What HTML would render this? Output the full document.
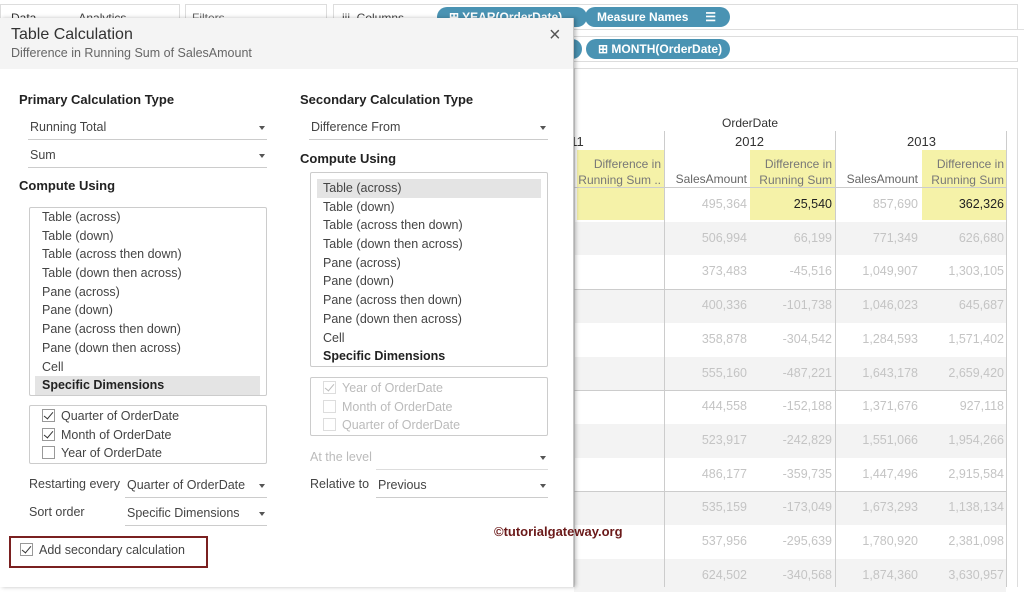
<!DOCTYPE html>
<html><head><meta charset="utf-8"><style>
*{box-sizing:border-box;margin:0;padding:0}
body{width:1024px;height:587px;overflow:hidden;background:#fff;font-family:"Liberation Sans",sans-serif;position:relative;color:#333}
.a{position:absolute;white-space:nowrap}
.pill{position:absolute;height:20px;border-radius:10px;background:#4a93b3;color:#fff;font-size:12px;font-weight:bold;line-height:20px;padding-left:12px}
.dlg{position:absolute;left:0;top:18px;width:574px;height:569px;background:#fff;border-right:1px solid #c8c8c8;box-shadow:2px 0 4px rgba(0,0,0,.25);z-index:5}
.hd{position:absolute;left:0;top:0;width:573px;height:51px;background:#f4f4f4}
.h{font-size:13px;font-weight:bold;color:#222}
.dd{position:absolute;height:26px;border-bottom:1px solid #ccc;font-size:12.5px;color:#444;line-height:26px;padding-left:2px}
.dd:after{content:"";position:absolute;right:2px;top:12px;border-left:3px solid transparent;border-right:3px solid transparent;border-top:4px solid #555}
.box{position:absolute;border:1px solid #ccc;border-radius:2px;font-size:12.5px;color:#444}
.box div{height:18.7px;line-height:18.7px;padding-left:12px}
.sel{background:#e4e4e4;font-weight:bold;color:#222}
.cb{display:inline-block;width:13px;height:13px;border:1px solid #999;vertical-align:-2px;margin-right:6px;position:relative;background:#fff}
.ck:after{content:"";position:absolute;left:3px;top:0px;width:4px;height:8px;border-right:1.5px solid #333;border-bottom:1.5px solid #333;transform:rotate(40deg)}
.dis{color:#bbb}.dis .cb{border-color:#ddd}.dis .ck:after{border-color:#bbb}
.cell{position:absolute;font-size:12px;text-align:right;color:#c4c4c4}
</style></head><body>
<div class="a" style="left:0;top:0;width:1024px;height:30px;background:#fff;border-bottom:1px solid #e0e0e0"></div>
<div class="a" style="left:0;top:4px;width:180px;height:26px;border:1px solid #ddd;font-size:12px;padding:6px 10px">Data<span style="margin-left:42px;color:#444">Analytics</span></div>
<div class="a" style="left:185px;top:4px;width:142px;height:26px;border:1px solid #ddd;font-size:12px;padding:6px 6px;color:#666">Filters</div>
<div class="a" style="left:333px;top:4px;width:685px;height:26px;border:1px solid #ddd;font-size:12px;padding:6px 8px;color:#444">iii&nbsp; Columns</div>
<div class="pill" style="left:437px;top:7px;width:150px">⊞ YEAR(OrderDate)</div>
<div class="pill" style="left:585px;top:7px;width:145px">Measure Names<span style="position:absolute;right:14px">☰</span></div>
<div class="a" style="left:333px;top:36px;width:685px;height:26px;border:1px solid #ddd"></div>
<div class="pill" style="left:540px;top:39px;width:42px"></div>
<div class="pill" style="left:586px;top:39px;width:144px">⊞ MONTH(OrderDate)</div>
<div class="a" style="left:574px;top:68px;width:444px;height:519px;border:1px solid #ddd;border-bottom:none"></div>
<div class="a" style="left:722px;top:116px;font-size:12px;color:#333">OrderDate</div>
<div class="a" style="left:563px;top:134px;font-size:13px">011</div>
<div class="a" style="left:735px;top:134px;font-size:13px">2012</div>
<div class="a" style="left:907px;top:134px;font-size:13px">2013</div>
<div class="a" style="left:577px;top:150px;width:87px;height:70px;background:#f5f2a8"></div>
<div class="a" style="left:750px;top:150px;width:85px;height:70px;background:#f5f2a8"></div>
<div class="a" style="left:922px;top:150px;width:84px;height:70px;background:#f5f2a8"></div>
<div class="a" style="left:664px;top:131px;width:1px;height:456px;background:#ccc"></div>
<div class="a" style="left:835px;top:131px;width:1px;height:456px;background:#ccc"></div>
<div class="a" style="left:1006px;top:131px;width:1px;height:456px;background:#ccc"></div>
<div class="a" style="left:574px;top:187px;width:432px;height:1px;background:#ccc"></div>
<div class="cell" style="left:577px;top:156px;width:84px;line-height:16px;color:#777">Difference in<br>Running Sum ..</div>
<div class="cell" style="left:750px;top:156px;width:82px;line-height:16px;color:#777">Difference in<br>Running Sum ..</div>
<div class="cell" style="left:922px;top:156px;width:82px;line-height:16px;color:#777">Difference in<br>Running Sum ..</div>
<div class="cell" style="left:664px;top:172px;width:83px;color:#666">SalesAmount</div>
<div class="cell" style="left:835px;top:172px;width:83px;color:#666">SalesAmount</div>
<div id="rows"></div>
<script>
var d=[["495,364","25,540","857,690","362,326"],["506,994","66,199","771,349","626,680"],["373,483","-45,516","1,049,907","1,303,105"],["400,336","-101,738","1,046,023","645,687"],["358,878","-304,542","1,284,593","1,571,402"],["555,160","-487,221","1,643,178","2,659,420"],["444,558","-152,188","1,371,676","927,118"],["523,917","-242,829","1,551,066","1,954,266"],["486,177","-359,735","1,447,496","2,915,584"],["535,159","-173,049","1,673,293","1,138,134"],["537,956","-295,639","1,780,920","2,381,098"],["624,502","-340,568","1,874,360","3,630,957"]];
var h="";
for(var i=0;i<12;i++){var y=188+i*33.7;
if(i==0){h+='<div class="a" style="left:577px;top:188px;width:87px;height:32px;background:#f5f2a8"></div><div class="a" style="left:750px;top:188px;width:85px;height:32px;background:#f5f2a8"></div><div class="a" style="left:922px;top:188px;width:84px;height:32px;background:#f5f2a8"></div>';}
if(i%2==1)h+='<div class="a" style="left:574px;top:'+y+'px;width:432px;height:33.7px;background:#f3f3f3;z-index:-1"></div>';
if(i==3||i==6||i==9)h+='<div class="a" style="left:574px;top:'+y+'px;width:432px;height:1px;background:#ccc"></div>';
var xs=[664,750,835,922],ws=[83,82,83,82];
for(var j=0;j<4;j++){var c=(i==0&&(j==1||j==3))?"color:#222":"";
h+='<div class="cell" style="left:'+xs[j]+'px;top:'+(y+9)+'px;width:'+ws[j]+'px;font-size:12.5px;'+c+'">'+d[i][j]+'</div>';}}
document.getElementById("rows").innerHTML=h;
</script>
<div class="a" style="left:494px;top:524px;font-size:13px;font-weight:bold;color:#6b1a1a;z-index:10">©tutorialgateway.org</div>
<div class="dlg">
<div class="hd"></div>
<div class="a" style="left:11px;top:8px;font-size:16px;color:#333">Table Calculation</div>
<div class="a" style="left:11px;top:28px;font-size:12.5px;color:#666">Difference in Running Sum of SalesAmount</div>
<div class="a" style="left:549px;top:6px;font-size:20px;color:#555">×</div>
<div class="a h" style="left:19px;top:74px">Primary Calculation Type</div>
<div class="dd" style="left:28px;top:96px;width:239px">Running Total</div>
<div class="dd" style="left:28px;top:124px;width:239px">Sum</div>
<div class="a h" style="left:19px;top:160px">Compute Using</div>
<div class="box" style="left:29px;top:189px;width:238px;height:189px;padding-top:0">
<div>Table (across)</div><div>Table (down)</div><div>Table (across then down)</div><div>Table (down then across)</div><div>Pane (across)</div><div>Pane (down)</div><div>Pane (across then down)</div><div>Pane (down then across)</div><div>Cell</div><div class="sel" style="margin:0 6px 0 5px;padding-left:7px">Specific Dimensions</div></div>
<div class="box" style="left:29px;top:387px;width:238px;height:59px;padding-top:1px">
<div><span class="cb ck"></span>Quarter of OrderDate</div><div><span class="cb ck"></span>Month of OrderDate</div><div><span class="cb"></span>Year of OrderDate</div></div>
<div class="a" style="left:29px;top:459px;font-size:12.5px;color:#444">Restarting every</div>
<div class="dd" style="left:125px;top:454px;width:142px">Quarter of OrderDate</div>
<div class="a" style="left:29px;top:487px;font-size:12.5px;color:#444">Sort order</div>
<div class="dd" style="left:125px;top:482px;width:142px">Specific Dimensions</div>
<div class="a" style="left:9px;top:518px;width:199px;height:32px;border:2px solid #7a2020"></div>
<div class="a" style="left:20px;top:525px;font-size:12.5px;color:#444"><span class="cb ck"></span>Add secondary calculation</div>
<div class="a h" style="left:300px;top:74px">Secondary Calculation Type</div>
<div class="dd" style="left:309px;top:96px;width:239px">Difference From</div>
<div class="a h" style="left:300px;top:133px">Compute Using</div>
<div class="box" style="left:310px;top:154px;width:238px;height:195px;padding-top:6px">
<div class="sel" style="margin:0 6px 0 6px;padding-left:6px;font-weight:normal;color:#444">Table (across)</div><div>Table (down)</div><div>Table (across then down)</div><div>Table (down then across)</div><div>Pane (across)</div><div>Pane (down)</div><div>Pane (across then down)</div><div>Pane (down then across)</div><div>Cell</div><div style="font-weight:bold;color:#222">Specific Dimensions</div></div>
<div class="box dis" style="left:310px;top:359px;width:238px;height:59px;padding-top:1px">
<div><span class="cb ck"></span>Year of OrderDate</div><div><span class="cb"></span>Month of OrderDate</div><div><span class="cb"></span>Quarter of OrderDate</div></div>
<div class="a" style="left:310px;top:432px;font-size:12.5px;color:#bbb">At the level</div>
<div class="dd" style="left:376px;top:426px;width:172px;border-color:#ddd"></div>
<div class="a" style="left:310px;top:459px;font-size:12.5px;color:#444">Relative to</div>
<div class="dd" style="left:376px;top:454px;width:172px">Previous</div>
</div>
</body></html>
